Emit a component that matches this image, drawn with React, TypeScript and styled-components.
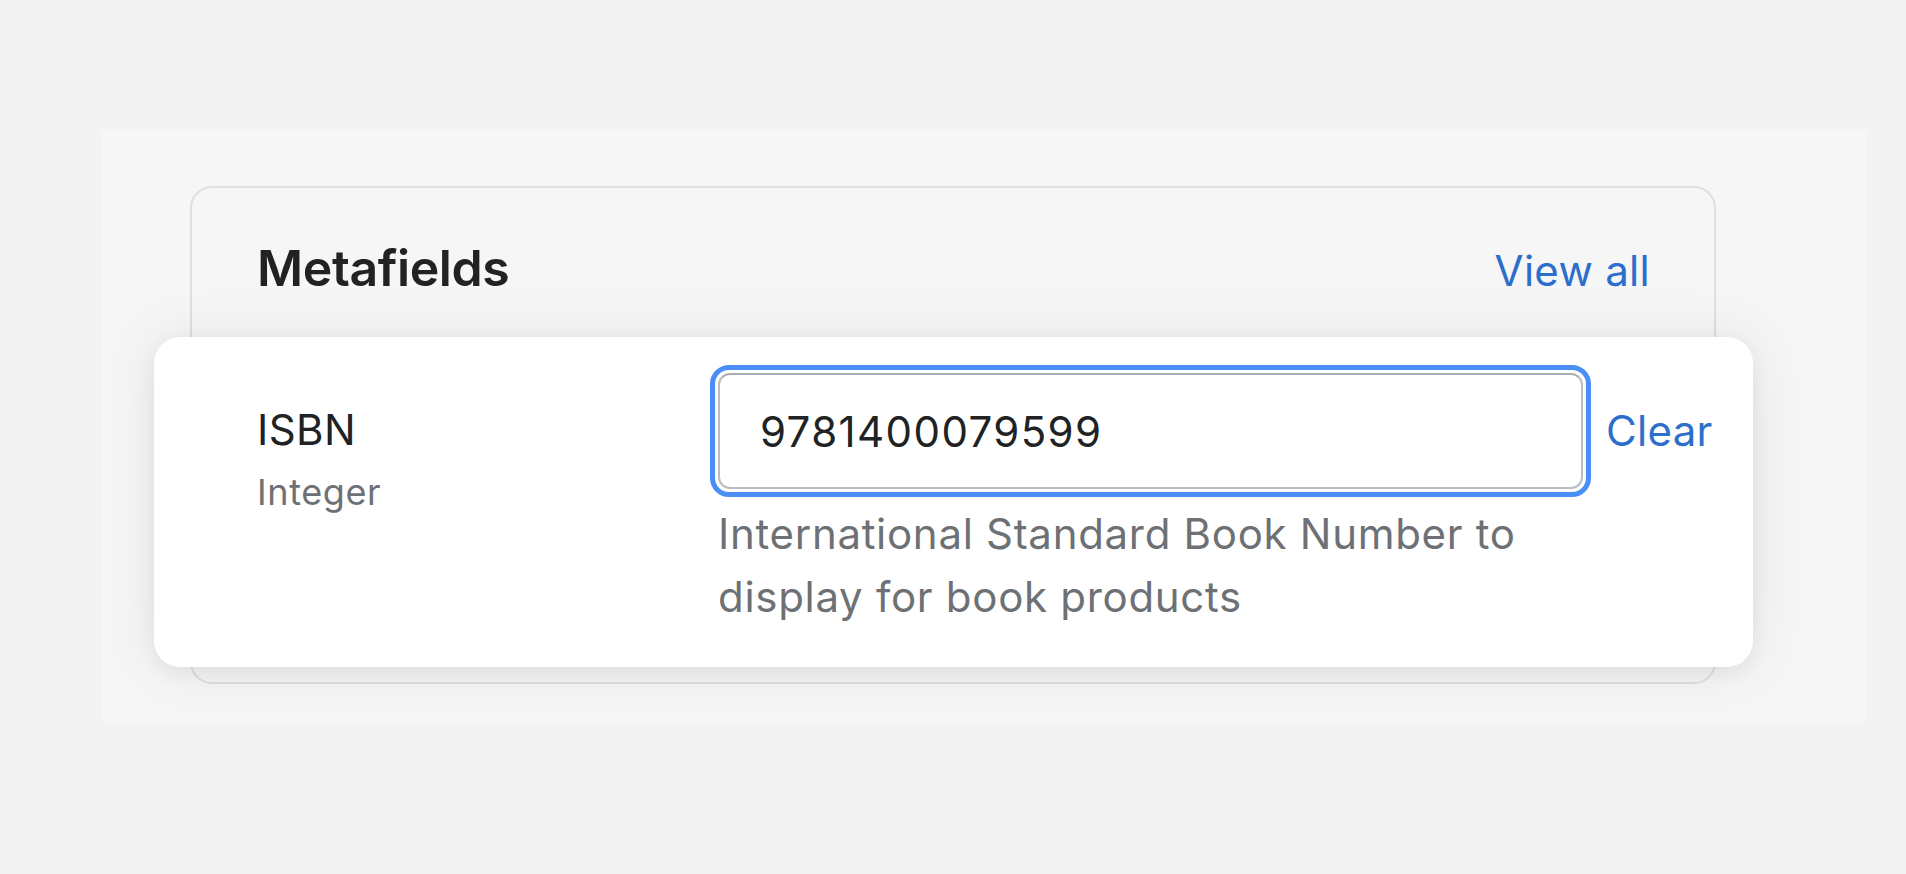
import React from "react";
import styled, { createGlobalStyle } from "styled-components";

const Global = createGlobalStyle`
  html, body {
    margin: 0;
    padding: 0;
    background: #f3f3f3;
    font-family: Inter, "Noto Sans", "Liberation Sans", sans-serif;
    color: #202223;
  }
  * { box-sizing: border-box; }
`;

const Page = styled.div`
  width: 1906px;
  height: 874px;
  padding: 130px 0 0 102px;
`;

const Panel = styled.div`
  width: 1764px;
  height: 593px;
  background: #f6f6f6;
  padding: 56px 0 0 88px;
`;

const Stage = styled.div`
  position: relative;
  width: 1526px;
`;

const BackCard = styled.section`
  height: 498px;
  border: 2px solid #dedfe0;
  border-radius: 22px;
  background: #f6f6f6;
  overflow: hidden;
`;

const Header = styled.header`
  display: flex;
  justify-content: space-between;
  align-items: baseline;
  padding: 50px 64px 0 65px;
`;

const Title = styled.h2`
  margin: 0;
  font-size: 50px;
  line-height: 60px;
  font-weight: 600;
  letter-spacing: -0.4px;
  color: #202223;
`;

const Link = styled.a<{ $size?: number }>`
  color: #2c6ecb;
  font-size: ${(p) => p.$size ?? 42}px;
  line-height: 60px;
  letter-spacing: 0.3px;
  text-decoration: none;
  cursor: pointer;
`;

const FrontCard = styled.div`
  position: absolute;
  left: -36px;
  top: 151px;
  width: 1599px;
  background: #ffffff;
  border-radius: 26px;
  box-shadow: 0 0 60px rgba(0, 0, 0, 0.08), 0 6px 20px rgba(0, 0, 0, 0.06);
  padding: 28px 39px 39px 103px;
  display: flex;
`;

const LabelCol = styled.div`
  width: 453px;
  flex: none;
  padding-top: 33px;
  display: flex;
  flex-direction: column;
  gap: 4px;
`;

const Label = styled.div`
  font-size: 42px;
  line-height: 63px;
  letter-spacing: 0.4px;
  color: #202223;
`;

const TypeText = styled.div`
  font-size: 36px;
  line-height: 54px;
  letter-spacing: 0.6px;
  color: #6d7175;
`;

const FieldCol = styled.div`
  display: flex;
  flex-direction: column;
  gap: 5px;
`;

const FieldRow = styled.div`
  display: flex;
  align-items: center;
  gap: 15px;
`;

const FocusRing = styled.div`
  width: 881px;
  height: 132px;
  border: 5px solid #4a8ef8;
  border-radius: 19px;
  padding: 3px;
  background: #ffffff;
`;

const Input = styled.input`
  width: 100%;
  height: 100%;
  border: 2px solid #b9bec2;
  border-top-color: #a9aeb3;
  border-radius: 12px;
  padding: 0 40px;
  font-family: inherit;
  font-size: 42px;
  letter-spacing: 1.4px;
  color: #202223;
  background: #ffffff;
  outline: none;
`;

const Help = styled.p`
  margin: 0;
  width: 881px;
  padding-left: 8px;
  font-size: 42px;
  line-height: 63px;
  letter-spacing: 0.7px;
  color: #6d7175;
`;

export default function App() {
  return (
    <>
      <Global />
      <Page>
        <Panel>
          <Stage>
            <BackCard>
              <Header>
                <Title>Metafields</Title>
                <Link>View all</Link>
              </Header>
            </BackCard>
            <FrontCard>
              <LabelCol>
                <Label>ISBN</Label>
                <TypeText>Integer</TypeText>
              </LabelCol>
              <FieldCol>
                <FieldRow>
                  <FocusRing>
                    <Input defaultValue="9781400079599" />
                  </FocusRing>
                  <Link>Clear</Link>
                </FieldRow>
                <Help>
                  International Standard Book Number to display for book
                  products
                </Help>
              </FieldCol>
            </FrontCard>
          </Stage>
        </Panel>
      </Page>
    </>
  );
}
